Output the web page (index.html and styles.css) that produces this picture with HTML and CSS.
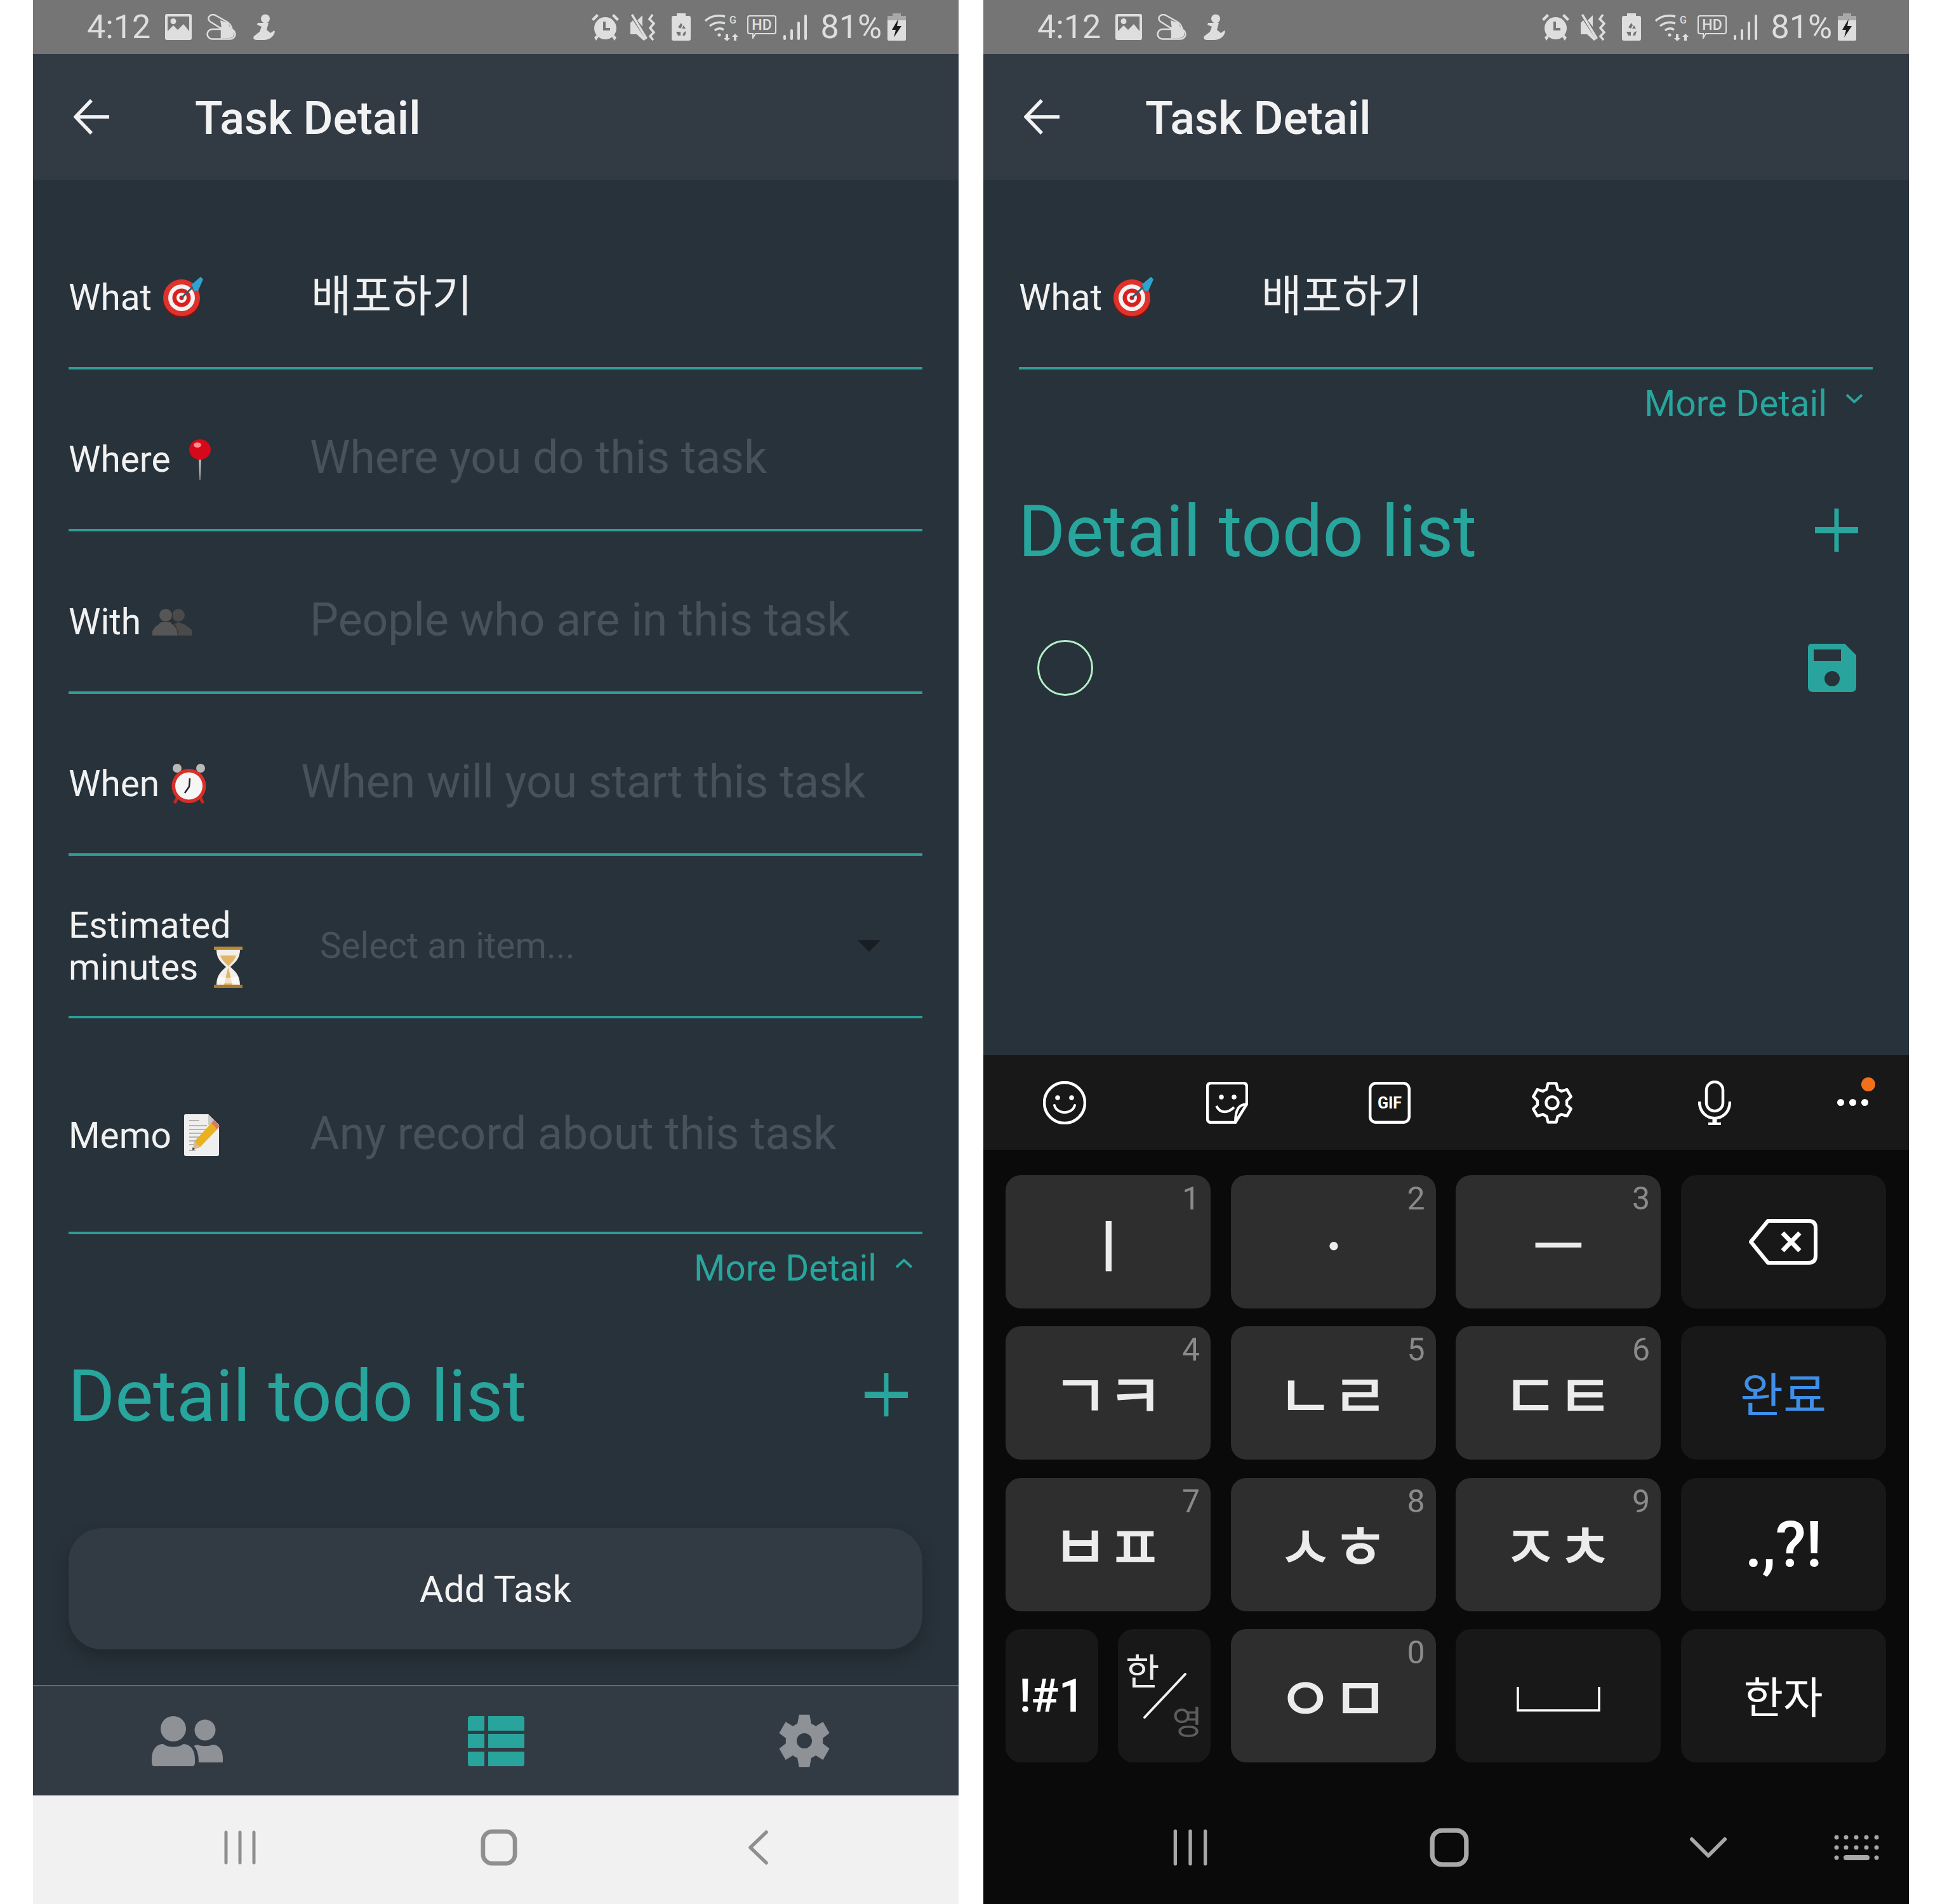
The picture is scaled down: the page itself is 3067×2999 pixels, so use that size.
FILE: index.html
```html
<!DOCTYPE html>
<html lang="ko">
<head>
<meta charset="utf-8">
<title>Task Detail</title>
<link rel="stylesheet" href="styles.css">
</head>
<body>
<svg class="sprite" aria-hidden="true">
  <symbol id="i-image" viewBox="0 0 42 41"><path fill-rule="evenodd" d="M3 0H39Q42 0 42 3V38Q42 41 39 41H3Q0 41 0 38V3Q0 0 3 0ZM4 27 13 18 20 25 29 16 38 27V4H4ZM13 7a4.500 4.500 0 1 1 0 9 4.500 4.500 0 0 1 0-9Z"/></symbol>
  <symbol id="i-pill" viewBox="0 0 47 41"><g fill="none" stroke="currentColor" stroke-width="2.500"><rect x="1.500" y="24" width="44" height="15.500" rx="7.750"/><path d="M24 24V39"/><path d="M6 2.500C9 .5 13 1 16 3L32 12C37 15 39 19 40 22H22L6 12C2 9 3 4.500 6 2.500Z"/></g><path d="M25 25H42Q45 31 42 36Q38 39 25 38ZM22 10 34 14 38 22H24Z"/></symbol>
  <symbol id="i-person" viewBox="0 0 36 41"><circle cx="20" cy="7.500" r="7"/><path d="M16 14H25L22 25 28 30 34 26 35 28C33 36 26 41 18 41H6C2 41 0 38 2 35L11 28 14 20 7 17 8 14Z"/></symbol>
  <symbol id="i-alarm" viewBox="0 0 45 43"><path fill-rule="evenodd" d="M22.500 6a17.500 17.500 0 1 1 0 35 17.500 17.500 0 0 1 0-35ZM19 13V27H30V23H23V13Z"/><path d="M1 9 9 1 12 4 4 12ZM44 9 36 1 33 4 41 12ZM5 38 9 34 12 37 8 43ZM40 38 36 34 33 37 37 43Z"/></symbol>
  <symbol id="i-mute" viewBox="0 0 41 42"><path d="M0 14 4 10 24 40 21 42 10 32H0ZM11 10 19 2V20ZM1 2 4 0 27 38 24 40Z"/><path fill="none" stroke="currentColor" stroke-width="3.500" d="M35 1 30 8 37 15 31 22 37 29 31 35 36 41"/></symbol>
  <symbol id="i-batrec" viewBox="0 0 30 43"><path fill-rule="evenodd" d="M8 0H22V4H27Q30 4 30 7V40Q30 43 27 43H3Q0 43 0 40V7Q0 4 3 4H8ZM15 15 10 22 14 24 17 19ZM19 19 16 24 22 24ZM7 29 10 35H14V29ZM23 28 19 30 17 35H21Z"/></symbol>
  <symbol id="i-wifi" viewBox="0 0 58 42"><g fill="none" stroke="currentColor" stroke-width="3.500"><path d="M2 11C10 3 22 1 33 4"/><path d="M9 19C16 13 26 12 33 15"/><path d="M17 26C21 22 27 22 31 25"/></g><circle cx="24" cy="33" r="2.600"/><path d="M34 32H38V38H41L36 43 31 38H34ZM47 43H51V36H54L49 31 44 36H47Z"/></symbol>
  <symbol id="i-hd" viewBox="0 0 46 37"><path fill="none" stroke="currentColor" stroke-width="2" d="M4 1H42Q45 1 45 4V26Q45 29 42 29H13L9 36V29H4Q1 29 1 26V4Q1 1 4 1Z"/></symbol>
  <symbol id="i-signal" viewBox="0 0 37 40"><rect y="32" width="4" height="8" rx="2"/><rect x="11" y="23" width="4" height="17" rx="2"/><rect x="22" y="11" width="4" height="29" rx="2"/><rect x="33" y="0" width="4" height="40" rx="2"/></symbol>
  <symbol id="i-batt" viewBox="0 0 29 43"><path fill="#a8a8a8" d="M8 0H21V4H29V11H0V4H8Z"/><path fill="#dedede" d="M0 11H29V41Q29 43 27 43H2Q0 43 0 41Z"/><path fill="#1d1d1d" d="M17 9 7 26H13L10 38 22 20H15Z"/></symbol>
  <symbol id="i-back" viewBox="0 0 56 56"><path fill="none" stroke="currentColor" stroke-width="5.500" d="M56 28H5M28 2 3 28 28 54"/></symbol>
  <symbol id="e-target" viewBox="0 0 65 65"><circle cx="30" cy="36" r="29" fill="#7d1413"/><circle cx="30" cy="33" r="29" fill="#e0312a"/><circle cx="30" cy="33" r="21" fill="#f2f2f2"/><circle cx="30" cy="33" r="14.500" fill="#d8211f"/><circle cx="30" cy="33" r="8" fill="#f5f5f5"/><circle cx="30" cy="33" r="3.500" fill="#c91b1b"/><path stroke="#2a5d70" stroke-width="3" d="M30 33 50 14"/><path fill="#2da3d2" d="M46 12 60 0 64 4 56 22 50 22Z"/></symbol>
  <symbol id="e-pin" viewBox="0 0 35 64"><path fill="#b9b9b9" d="M16 30H20L18.500 64H17.500Z"/><ellipse cx="18" cy="16" rx="17" ry="16" fill="#d6091a"/><ellipse cx="14" cy="9" rx="6" ry="4" fill="#ff8d8d"/></symbol>
  <symbol id="e-people" viewBox="0 0 62 43"><g fill="#4a4a4a"><circle cx="41" cy="11" r="10"/><path d="M32 26 41 22 52 26 62 34V43H24V32Z"/></g><path fill="none" stroke="#2f2f2f" stroke-width="1.500" d="M31 9C32 20 33 24 38 32 39 36 40 40 40 43"/><g fill="#565656"><circle cx="21" cy="11" r="10"/><path d="M14 22H28L38 32 40 43H0V36L4 30Z"/></g></symbol>
  <symbol id="e-clock" viewBox="0 0 59 64"><g fill="#b9b9b9"><circle cx="11" cy="7" r="7"/><circle cx="48" cy="7" r="7"/></g><path stroke="#c72820" stroke-width="5" d="M12 52 7 62M47 52 52 62"/><circle cx="29.500" cy="35" r="27" fill="#d92f29"/><circle cx="29.500" cy="35" r="21.500" fill="#f6f6f6"/><path fill="none" stroke="#222" stroke-width="2.500" d="M31 23 30 36 23 46"/></symbol>
  <symbol id="e-hourglass" viewBox="0 0 45 65"><path fill="#f2efe8" d="M4 5H41C41 20 32 26 26 32 32 38 41 44 41 60H4C4 44 13 38 19 32 13 26 4 20 4 5Z"/><path fill="#e0b56a" d="M10 14H35C33 21 28 25 23 31 17 25 12 21 10 14ZM22 34H23L29 60H16Z"/><path fill="#fff" d="M8 46C14 50 30 50 37 46L40 58H5Z" opacity=".6"/><rect width="45" height="5" fill="#b98a35"/><rect y="60" width="45" height="5" fill="#a77a2a"/></symbol>
  <symbol id="e-memo" viewBox="0 0 56 67"><path fill="#efefef" d="M2 0H38L55 17V63Q55 66 52 66H3Q0 66 0 63V3Q0 0 2 0Z"/><path fill="#c9c9c9" d="M38 0V17H55Z"/><path stroke="#a2a2a2" stroke-width="1.500" d="M8 10H24M8 18H36M8 24H40M8 30H42M8 36H34M8 42H28M8 48H22M8 57H18"/><path fill="#e9b11e" d="M43 14 52 24 25 52 16 43Z"/><path fill="#d9795d" d="M43 14 47 9 56 19 52 24Z"/><path fill="#d8b98c" d="M16 43 25 52 14 56Z"/><path fill="#333" d="M13.500 52 17 55 13 56.500Z"/></symbol>
  <symbol id="i-plus" viewBox="0 0 68 68"><path fill="currentColor" d="M30.500 0H37.500V29H68V39H37.500V68H30.500V39H0V29H30.500Z"/></symbol>
  <symbol id="i-save" viewBox="0 0 76 76"><path fill="currentColor" fill-rule="evenodd" d="M6 0H58L76 18V68Q76 76 68 76H8Q0 76 0 68V6Q0 0 6 0ZM9 9V27H52V9ZM38 43a12 12 0 1 0 0 24 12 12 0 0 0 0-24Z"/></symbol>
  <symbol id="i-users" viewBox="0 0 112 79"><circle cx="34" cy="20" r="20"/><path d="M0 68C0 52 8 44 18 44 26 50 42 50 50 44 60 44 68 52 68 68V74Q68 79 63 79H5Q0 79 0 74Z"/><circle cx="84" cy="22" r="16.500"/><path d="M72 45C78 48 90 48 96 45 106 45 112 54 112 66V73H74C74 62 72 52 66 47Z"/></symbol>
  <symbol id="i-table" viewBox="0 0 89 79"><path d="M4 0H26V23H0V4Q0 0 4 0ZM32 0H85Q89 0 89 4V23H32ZM0 28H26V50H0ZM32 28H89V50H32ZM0 56H26V79H4Q0 79 0 75ZM32 56H89V75Q89 79 85 79H32Z"/></symbol>
  <symbol id="i-gear-solid" viewBox="0 0 100 100"><path fill-rule="evenodd" d="M37.300 18.500 40.400 2H59.600L62.700 18.500A34 34 0 0 1 70.900 23.200L84.200 15 96 35.800 83.700 45.300A34 34 0 0 1 83.700 54.700L96 64.200 84.200 85 70.900 76.800A34 34 0 0 1 62.700 81.500L59.600 98H40.400L37.300 81.500A34 34 0 0 1 29.100 76.800L15.800 85 4 64.200 16.300 54.700A34 34 0 0 1 16.300 45.300L4 35.800 15.800 15 29.100 23.200A34 34 0 0 1 37.300 18.500ZM50 36a14 14 0 1 0 0 28 14 14 0 0 0 0-28Z"/></symbol>
  <symbol id="i-bars" viewBox="0 0 50 54"><path fill="none" stroke="currentColor" stroke-width="5" stroke-linecap="round" d="M3 3V51M25 3V51M47 3V51"/></symbol>
  <symbol id="i-home" viewBox="0 0 60 60"><rect x="4" y="4" width="52" height="52" rx="15" fill="none" stroke="currentColor" stroke-width="7"/></symbol>
  <symbol id="i-chev-left" viewBox="0 0 32 54"><path fill="none" stroke="currentColor" stroke-width="5.500" stroke-linecap="round" stroke-linejoin="round" d="M29 3 4 27 29 51"/></symbol>
  <symbol id="i-chev-down" viewBox="0 0 58 34"><path fill="none" stroke="currentColor" stroke-width="6" stroke-linecap="round" stroke-linejoin="round" d="M3 4 29 30 55 4"/></symbol>
  <symbol id="i-kbd" viewBox="0 0 71 40"><g fill="currentColor"><circle cx="4" cy="4" r="3.500"/><circle cx="19" cy="4" r="3.500"/><circle cx="35" cy="4" r="3.500"/><circle cx="51" cy="4" r="3.500"/><circle cx="67" cy="4" r="3.500"/><circle cx="4" cy="20" r="3.500"/><circle cx="19" cy="20" r="3.500"/><circle cx="35" cy="20" r="3.500"/><circle cx="51" cy="20" r="3.500"/><circle cx="67" cy="20" r="3.500"/><circle cx="4" cy="36" r="3.500"/><rect x="15" y="32" width="41" height="8" rx="4"/><circle cx="67" cy="36" r="3.500"/></g></symbol>
  <symbol id="k-smile" viewBox="0 0 68 68"><circle cx="34" cy="34" r="32" fill="none" stroke="#fff" stroke-width="4.500"/><circle cx="23" cy="26" r="3.800" fill="#fff"/><circle cx="45" cy="26" r="3.800" fill="#fff"/><path fill="none" stroke="#fff" stroke-width="4" stroke-linecap="round" d="M18 38C22 53 46 53 50 38"/></symbol>
  <symbol id="k-sticker" viewBox="0 0 66 66"><path fill="none" stroke="#fff" stroke-width="4.500" stroke-linejoin="round" d="M8 2H58Q64 2 64 8V35L46 64H8Q2 64 2 58V8Q2 2 8 2Z"/><path fill="none" stroke="#fff" stroke-width="4" d="M64 35C52 36 46 42 46 64M16 38C22 50 34 50 44 40"/><circle cx="24" cy="24" r="3.800" fill="#fff"/><circle cx="44" cy="24" r="3.800" fill="#fff"/></symbol>
  <symbol id="k-gif" viewBox="0 0 66 66"><rect x="2.200" y="2.200" width="61.600" height="61.600" rx="9" fill="none" stroke="#fff" stroke-width="4.500"/></symbol>
  <symbol id="k-gear" viewBox="0 0 100 100"><path fill="none" stroke="#fff" stroke-width="6.500" stroke-linejoin="round" d="M37.300 18.500 40.400 5H59.600L62.700 18.500A34 34 0 0 1 70.900 23.200L84.200 19.200 93.700 35.800 83.700 45.300A34 34 0 0 1 83.700 54.700L93.700 64.200 84.200 80.800 70.900 76.800A34 34 0 0 1 62.700 81.500L59.600 95H40.400L37.300 81.500A34 34 0 0 1 29.100 76.800L15.800 80.800 6.300 64.200 16.300 54.700A34 34 0 0 1 16.300 45.300L6.300 35.800 15.800 19.200 29.100 23.200A34 34 0 0 1 37.300 18.500Z"/><circle cx="50" cy="50" r="14" fill="none" stroke="#fff" stroke-width="6.500"/></symbol>
  <symbol id="k-mic" viewBox="0 0 52 70"><rect x="13" y="2" width="26" height="46" rx="13" fill="none" stroke="#fff" stroke-width="4.500"/><path fill="none" stroke="#fff" stroke-width="4.500" d="M2 33C2 68 50 68 50 33"/><path stroke="#fff" stroke-width="7" d="M26 58V66"/><path stroke="#fff" stroke-width="4" d="M16 68H36"/></symbol>
  <symbol id="k-backspace" viewBox="0 0 108 72"><path fill="none" stroke="#fff" stroke-width="6" stroke-linejoin="round" d="M30 3H94Q105 3 105 14V58Q105 69 94 69H30L3 36Z"/><path stroke="#fff" stroke-width="7" d="M53 22 80 50M80 22 53 50"/></symbol>
  <symbol id="k-space" viewBox="0 0 132 40"><path fill="none" stroke="#fff" stroke-width="3.500" d="M2 0V37H130V0"/></symbol>
  <symbol id="k-slash" viewBox="0 0 68 72"><path stroke="#f2f2f2" stroke-width="4" stroke-linecap="round" d="M66 2 2 70"/></symbol>
</svg>

<section class="phone">
  <header class="status">
    <span class="clock">4:12</span>
    <svg class="st ml24" width="42" height="41"><use href="#i-image"/></svg>
    <svg class="st ml23" width="47" height="41"><use href="#i-pill"/></svg>
    <svg class="st ml26" width="36" height="41"><use href="#i-person"/></svg>
    <div class="status-right">
      <svg class="st" width="45" height="43"><use href="#i-alarm"/></svg>
      <svg class="st ml17" width="41" height="42"><use href="#i-mute"/></svg>
      <svg class="st ml24" width="30" height="43"><use href="#i-batrec"/></svg>
      <svg class="st ml21" width="58" height="42"><use href="#i-wifi"/><text x="40" y="15" class="tiny-g">G</text></svg>
      <svg class="st ml10" width="46" height="37"><use href="#i-hd"/><text x="23" y="23" text-anchor="middle" class="tiny-hd">HD</text></svg>
      <svg class="st ml11" width="37" height="40"><use href="#i-signal"/></svg>
      <span class="pct">81%</span>
      <svg class="st ml9" width="29" height="43"><use href="#i-batt"/></svg>
    </div>
  </header>
  <div class="appbar">
    <svg class="back" width="56" height="56"><use href="#i-back"/></svg>
    <h1 class="title">Task Detail</h1>
  </div>
  <form class="form">
    <div class="row">
      <div class="label"><span>What</span><svg class="emoji ml17" width="65" height="65"><use href="#e-target"/></svg></div>
      <div class="value">배포하기</div>
    </div>
    <div class="row">
      <div class="label"><span>Where</span><svg class="emoji ml28" width="35" height="64"><use href="#e-pin"/></svg></div>
      <div class="placeholder">Where you do this task</div>
    </div>
    <div class="row">
      <div class="label"><span>With</span><svg class="emoji ml18" width="62" height="43"><use href="#e-people"/></svg></div>
      <div class="placeholder">People who are in this task</div>
    </div>
    <div class="row">
      <div class="label label-short"><span>When</span><svg class="emoji ml17" width="59" height="64"><use href="#e-clock"/></svg></div>
      <div class="placeholder">When will you start this task</div>
    </div>
    <div class="row">
      <div class="label label-long label-stack"><span>Estimated</span><span class="label-line"><span>minutes</span><svg class="emoji ml24" width="47" height="65"><use href="#e-hourglass"/></svg></span></div>
      <div class="select"><span>Select an item...</span><i class="caret"></i></div>
    </div>
    <div class="row row-memo">
      <div class="label"><span>Memo</span><svg class="emoji ml20" width="56" height="67"><use href="#e-memo"/></svg></div>
      <div class="placeholder">Any record about this task</div>
    </div>
  </form>
  <div class="more"><span>More Detail</span><svg class="more-chev" width="28" height="16" viewBox="0 0 28 16"><path fill="none" stroke="currentColor" stroke-width="4" d="M2 14 14 3 26 14"/></svg></div>
  <div class="todo-head"><h2 class="todo-title">Detail todo list</h2><svg class="plus" width="68" height="68"><use href="#i-plus"/></svg></div>
  <button class="add" type="button">Add Task</button>
  <nav class="tabs">
    <svg class="tab-grey" width="112" height="79"><use href="#i-users"/></svg>
    <svg class="tab-teal" width="89" height="79"><use href="#i-table"/></svg>
    <svg class="tab-grey" width="86" height="88"><use href="#i-gear-solid"/></svg>
  </nav>
  <div class="nav nav-light">
    <svg width="50" height="54"><use href="#i-bars"/></svg>
    <svg width="58" height="58"><use href="#i-home"/></svg>
    <svg width="32" height="54"><use href="#i-chev-left"/></svg>
  </div>
</section>

<section class="phone">
  <header class="status">
    <span class="clock">4:12</span>
    <svg class="st ml24" width="42" height="41"><use href="#i-image"/></svg>
    <svg class="st ml23" width="47" height="41"><use href="#i-pill"/></svg>
    <svg class="st ml26" width="36" height="41"><use href="#i-person"/></svg>
    <div class="status-right">
      <svg class="st" width="45" height="43"><use href="#i-alarm"/></svg>
      <svg class="st ml17" width="41" height="42"><use href="#i-mute"/></svg>
      <svg class="st ml24" width="30" height="43"><use href="#i-batrec"/></svg>
      <svg class="st ml21" width="58" height="42"><use href="#i-wifi"/><text x="40" y="15" class="tiny-g">G</text></svg>
      <svg class="st ml10" width="46" height="37"><use href="#i-hd"/><text x="23" y="23" text-anchor="middle" class="tiny-hd">HD</text></svg>
      <svg class="st ml11" width="37" height="40"><use href="#i-signal"/></svg>
      <span class="pct">81%</span>
      <svg class="st ml9" width="29" height="43"><use href="#i-batt"/></svg>
    </div>
  </header>
  <div class="appbar">
    <svg class="back" width="56" height="56"><use href="#i-back"/></svg>
    <h1 class="title">Task Detail</h1>
  </div>
  <form class="form">
    <div class="row">
      <div class="label"><span>What</span><svg class="emoji ml17" width="65" height="65"><use href="#e-target"/></svg></div>
      <div class="value">배포하기</div>
    </div>
  </form>
  <div class="more"><span>More Detail</span><svg class="more-chev" width="28" height="16" viewBox="0 0 28 16"><path fill="none" stroke="currentColor" stroke-width="4" d="M2 2 14 13 26 2"/></svg></div>
  <div class="todo-head"><h2 class="todo-title">Detail todo list</h2><svg class="plus" width="68" height="68"><use href="#i-plus"/></svg></div>
  <div class="todo-item"><span class="ring"></span><svg class="save" width="76" height="76"><use href="#i-save"/></svg></div>
  <div class="kb-bar">
    <svg width="68" height="68"><use href="#k-smile"/></svg>
    <svg width="66" height="66"><use href="#k-sticker"/></svg>
    <svg width="66" height="66"><use href="#k-gif"/><text x="33" y="42" text-anchor="middle" class="gif-text">GIF</text></svg>
    <svg width="68" height="68"><use href="#k-gear"/></svg>
    <svg width="52" height="70"><use href="#k-mic"/></svg>
    <span class="dots"><i></i><i></i><i></i><b class="badge"></b></span>
  </div>
  <div class="keys">
    <div class="key"><span class="num">1</span><span class="jamo jamo-one">ㅣ</span></div>
    <div class="key"><span class="num">2</span><span class="jamo jamo-one">ㆍ</span></div>
    <div class="key"><span class="num">3</span><span class="jamo jamo-one">ㅡ</span></div>
    <div class="key key-fn"><svg width="108" height="72"><use href="#k-backspace"/></svg></div>
    <div class="key"><span class="num">4</span><span class="jamo">ㄱㅋ</span></div>
    <div class="key"><span class="num">5</span><span class="jamo">ㄴㄹ</span></div>
    <div class="key"><span class="num">6</span><span class="jamo">ㄷㅌ</span></div>
    <div class="key key-fn key-done">완료</div>
    <div class="key"><span class="num">7</span><span class="jamo">ㅂㅍ</span></div>
    <div class="key"><span class="num">8</span><span class="jamo">ㅅㅎ</span></div>
    <div class="key"><span class="num">9</span><span class="jamo">ㅈㅊ</span></div>
    <div class="key key-fn key-punct">.,?!</div>
    <div class="key-pair">
      <div class="key key-fn key-sym">!#1</div>
      <div class="key key-fn key-lang"><span class="lang-han">한</span><svg class="lang-slash" width="68" height="72"><use href="#k-slash"/></svg><span class="lang-eng">영</span></div>
    </div>
    <div class="key"><span class="num">0</span><span class="jamo">ㅇㅁ</span></div>
    <div class="key key-fn"><svg class="space-ico" width="132" height="40"><use href="#k-space"/></svg></div>
    <div class="key key-fn key-hanja">한자</div>
  </div>
  <div class="nav nav-dark">
    <svg width="56" height="58"><use href="#i-bars"/></svg>
    <svg width="62" height="62"><use href="#i-home"/></svg>
    <svg width="58" height="34"><use href="#i-chev-down"/></svg>
    <svg width="71" height="40"><use href="#i-kbd"/></svg>
  </div>
</section>
</body>
</html>
```
FILE: styles.css
```css
* { box-sizing: border-box; }
html, body { margin: 0; padding: 0; }
body {
  width: 3067px;
  height: 2999px;
  background: #fff;
  overflow: hidden;
  display: flex;
  gap: 39px;
  padding-left: 52px;
  font-family: Roboto, "Noto Sans CJK KR", sans-serif;
}
.sprite { display: block; width: 0; height: 0; margin-left: -39px; }
.tiny-g { font: 500 16px Roboto, sans-serif; fill: #dedede; }
.tiny-hd { font: 500 23px Roboto, sans-serif; fill: #dedede; }
.gif-text { font: 700 25px Roboto, sans-serif; fill: #fff; }

.phone {
  width: 1458px;
  height: 2999px;
  flex: none;
  display: flex;
  flex-direction: column;
  background: #28323a;
}

/* status bar */
.status {
  height: 85px;
  flex: none;
  background: #757575;
  color: #dedede;
  fill: #dedede;
  display: flex;
  align-items: center;
  padding: 0 83px 0 85px;
}
.clock { font-size: 52px; line-height: 1; width: 99px; white-space: nowrap; }
.st { flex: none; fill: #dedede; color: #dedede; }
.status-right { margin-left: auto; display: flex; align-items: center; }
.pct { font-size: 52px; line-height: 1; margin-left: 21px; white-space: nowrap; }
.ml9 { margin-left: 9px; }
.ml10 { margin-left: 10px; }
.ml11 { margin-left: 11px; }
.ml17 { margin-left: 17px; }
.ml18 { margin-left: 18px; }
.ml20 { margin-left: 20px; }
.ml21 { margin-left: 21px; }
.ml23 { margin-left: 23px; }
.ml24 { margin-left: 24px; }
.ml26 { margin-left: 26px; }
.ml28 { margin-left: 28px; }

/* app bar */
.appbar {
  height: 198px;
  flex: none;
  background: #323a44;
  display: flex;
  align-items: center;
  padding: 0 0 0 64px;
  color: #f2f2f2;
}
.back { flex: none; color: #f2f2f2; }
.title {
  margin: 6px 0 0 135px;
  font-size: 72px;
  font-weight: 500;
  line-height: 1;
  color: #f2f2f2;
}

/* form */
.form { flex: none; padding: 43px 57px 0 56px; }
.row {
  height: 255.5px;
  padding-top: 32px;
  border-bottom: 4px solid #2f9d97;
  display: flex;
  align-items: center;
}
.row-memo { height: 340px; }
.label {
  flex: none;
  width: 382px;
  display: flex;
  align-items: center;
  font-size: 56.800px;
  line-height: 66px;
  color: #f1f1f1;
  padding-top: 2px;
}
.label-short { width: 368px; }
.label-long { width: 396px; }
.label-stack { flex-direction: column; align-items: flex-start; }
.label-line { display: flex; align-items: center; height: 66px; }
.emoji { flex: none; }
.value {
  font-family: "Noto Sans CJK KR", sans-serif;
  font-size: 69px;
  line-height: 80px;
  color: #f0f0f0;
  margin-top: -14px;
}
.placeholder {
  font-size: 71.500px;
  line-height: 80px;
  color: #46525c;
  white-space: nowrap;
  margin: -4px 0 0 -2px;
}
.select {
  flex: 1;
  display: flex;
  align-items: center;
  justify-content: space-between;
  padding-right: 66px;
  font-size: 56.500px;
  color: #46525c;
}
.caret {
  width: 0;
  height: 0;
  border-left: 18px solid transparent;
  border-right: 18px solid transparent;
  border-top: 18px solid #171e24;
}

/* detail */
.more {
  height: 108px;
  flex: none;
  display: flex;
  align-items: center;
  justify-content: flex-end;
  padding-right: 72px;
  font-size: 56.500px;
  color: #28a59c;
}
.more-chev { flex: none; margin: 0 0 16px 29px; color: #28a59c; }
.todo-head {
  height: 294px;
  flex: none;
  display: flex;
  align-items: center;
  justify-content: space-between;
  padding: 2px 80px 0 55px;
  color: #28a59c;
}
.todo-title { margin: 0; font-size: 113px; font-weight: 400; line-height: 1; color: #28a59c; }
.plus { flex: none; color: #28a59c; margin-bottom: 6px; }
.add {
  margin: auto 57px 56px 56px;
  height: 191px;
  flex: none;
  border: 0;
  border-radius: 52px;
  background: #323a44;
  box-shadow: 0 12px 24px rgba(20, 26, 30, .45);
  color: #f4f4f4;
  font: 400 58px Roboto, sans-serif;
}
.tabs {
  height: 174px;
  flex: none;
  background: #323a44;
  border-top: 2px solid #2a8683;
  display: grid;
  grid-template-columns: repeat(3, 1fr);
  align-items: center;
  justify-items: center;
}
.tab-grey { fill: #8e9196; }
.tab-teal { fill: #29a49c; }

/* system nav */
.nav {
  height: 171px;
  flex: none;
  display: grid;
  grid-template-columns: 408px 408px 408px 58px;
  padding: 0 0 7px 122px;
  align-items: center;
  justify-items: center;
}
.nav-light { background: #f1f1f1; color: #8f8f8f; }
.nav-dark { background: #0a0a0a; color: #a8a8a8; }

/* todo item */
.todo-item {
  flex: none;
  margin-top: 24px;
  padding: 0 83px 0 85px;
  display: flex;
  align-items: center;
  justify-content: space-between;
}
.ring { width: 88px; height: 88px; border: 3px solid #b3f0c8; border-radius: 50%; }
.save { flex: none; color: #29a49c; }

/* keyboard */
.kb-bar {
  margin-top: auto;
  height: 149px;
  flex: none;
  background: #181818;
  display: grid;
  grid-template-columns: repeat(5, 256px) 178px;
  align-items: center;
  justify-items: center;
}
.dots { position: relative; display: flex; gap: 8px; }
.dots i { width: 11px; height: 11px; border-radius: 50%; background: #fff; }
.badge {
  position: absolute;
  right: -11px;
  top: -34px;
  width: 22px;
  height: 22px;
  border-radius: 50%;
  background: #f2701a;
}
.keys {
  flex: none;
  background: #0a0a0a;
  display: grid;
  grid-template-columns: repeat(4, 323px);
  grid-auto-rows: 210px;
  column-gap: 31.500px;
  row-gap: 28.300px;
  padding: 40px 0 52px 35px;
}
.key {
  position: relative;
  display: flex;
  align-items: center;
  justify-content: center;
  background: #2e2e2e;
  border-radius: 24px;
  color: #ececec;
  font-family: "Noto Sans CJK KR", sans-serif;
}
.key-fn { background: #181818; }
.key-pair { display: flex; gap: 31px; }
.key-pair .key { width: 146px; }
.num {
  position: absolute;
  top: 2px;
  right: 17px;
  font: 400 50px/70px Roboto, sans-serif;
  color: #8a8a8a;
}
.jamo { font-size: 97px; font-weight: 500; line-height: 1; letter-spacing: -3px; margin: -6px 4px 0 0; }
.jamo-one { font-size: 88px; margin: 2px 2px 0 0; }
.key-done { color: #3f8fe8; font-size: 74px; padding-bottom: 5px; }
.key-punct { font: 500 100px Roboto, sans-serif; color: #fff; letter-spacing: -1px; }
.key-sym { font: 500 72px Roboto, sans-serif; color: #fff; }
.key-hanja { font-size: 68px; color: #fff; padding-bottom: 4px; }
.lang-han { position: absolute; left: 12px; top: 34px; font-size: 58px; line-height: 1; color: #ececec; }
.lang-eng { position: absolute; right: 13px; bottom: 40px; font-size: 52px; line-height: 1; color: #5d5d5d; }
.lang-slash { position: absolute; left: 40px; top: 69px; }
.space-ico { margin-top: 12px; }
```
